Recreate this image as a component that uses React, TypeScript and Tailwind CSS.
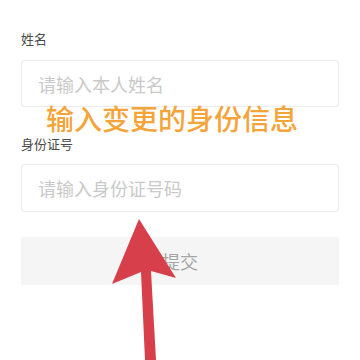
import React, { useState } from "react";

const font = { fontFamily: '"Noto Sans CJK SC", "Noto Sans", sans-serif' };

const App: React.FC = () => {
  const [name, setName] = useState<string>("");
  const [idNo, setIdNo] = useState<string>("");

  return (
    <div className="relative w-[360px] h-[360px] overflow-hidden bg-white" style={font}>
      <div className="flex flex-col px-[21px] pt-[30px]">
        {/* 姓名 */}
        <label className="text-[13px] leading-[18px] text-[#4a4a4a]">姓名</label>
        <input
          value={name}
          onChange={(e) => setName(e.target.value)}
          placeholder="请输入本人姓名"
          className="mt-[12px] h-[47px] w-full rounded-[3px] border border-[#ececec] bg-white px-[16px] text-[18px] text-[#333] outline-none placeholder:text-[#c9c9c9]"
        />

        {/* 身份证号 */}
        <label className="mt-[28px] text-[13px] leading-[18px] text-[#4a4a4a]">身份证号</label>
        <input
          value={idNo}
          onChange={(e) => setIdNo(e.target.value)}
          placeholder="请输入身份证号码"
          className="mt-[11px] h-[48px] w-full rounded-[3px] border border-[#ececec] bg-white px-[16px] text-[18px] text-[#333] outline-none placeholder:text-[#c9c9c9]"
        />

        {/* submit */}
        <button className="mt-[25px] h-[48px] w-full rounded-[3px] bg-[#f5f5f5] text-[18px] text-[#a5a5a5]">
          提交
        </button>
      </div>

      {/* annotation text */}
      <div className="absolute left-[46px] top-[102px] text-[28px] font-medium leading-[32px] text-[#f5a43a]">
        输入变更的身份信息
      </div>

      {/* annotation arrow */}
      <svg className="absolute left-0 top-0" width="360" height="360" viewBox="0 0 360 360">
        <polygon
          points="139,219 176,278 151,271 156,360 145,360 141,272 112,284"
          fill="#d73f4b"
        />
      </svg>
    </div>
  );
};

export default App;
